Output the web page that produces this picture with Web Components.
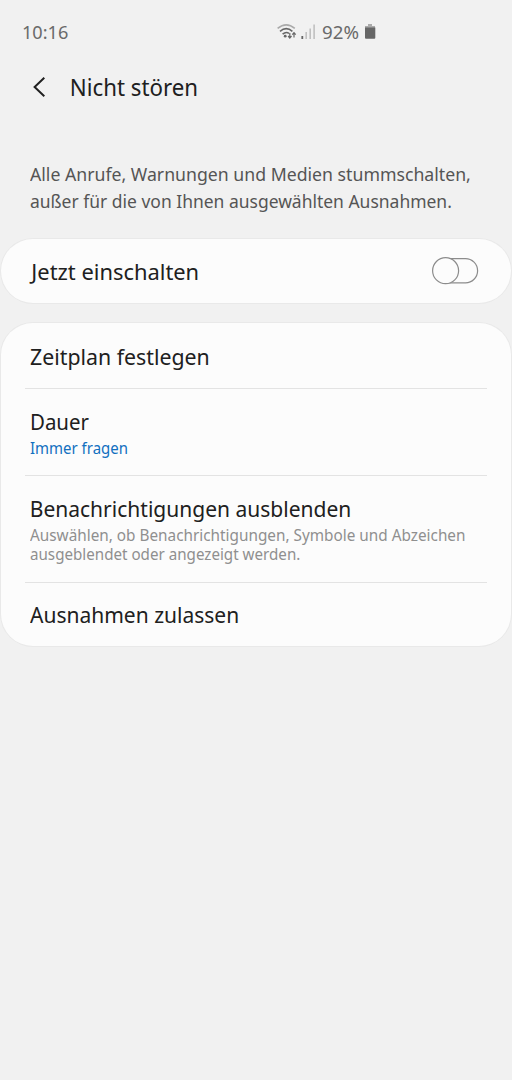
<!DOCTYPE html>
<html lang="de"><head><meta charset="utf-8"><title>Nicht stören</title>
<style>
html,body{margin:0;height:100%;background:#f1f1f1}
body{font-family:"Noto Sans","Open Sans",sans-serif;color:#202020}
</style></head><body>
<dnd-screen></dnd-screen>
<script>
const define=(name,html,init)=>customElements.define(name,class extends HTMLElement{
  constructor(){super();const t=document.createElement('template');t.innerHTML=html;
    this.attachShadow({mode:'open'}).append(t.content.cloneNode(true));}
  connectedCallback(){if(init)init(this);}
});
const ctx=document.createElement('canvas').getContext('2d');

define('status-bar',`<style>
:host{display:flex;height:26px;padding:19px 0 0 23px;font-size:18px;line-height:26px;color:#6a6a6a}
.time{width:254px}.pct{width:42px}svg{display:block;margin-top:4px}
</style>
<fit-line class="time" ink="45">10:16</fit-line>
<svg width="45" height="18" viewBox="277 23 45 18" fill="none" stroke="#666" stroke-width="1.6">
<path d="M277.6 28.4Q286.2 21.2 294.8 28.4" stroke="#aaa"/><path d="M280 31.3Q286.2 26.1 292.4 31.3M282.6 34.2Q286 31.2 289 33.4"/>
<circle cx="285.2" cy="36.2" r="1.4" fill="#666" stroke="none"/>
<path d="M289.8 33v5M288.1 36l1.7 2 1.7-2M294 37.6v-5M292.3 34.6l1.7-2 1.7 2" stroke-width="1.2"/>
<path d="M302.3 36v3" stroke-width="1.8"/><path d="M306.2 32v7M310.2 28.5v10.5M314.1 24.5v14.5" stroke="#bdbdbd" stroke-width="1.5"/></svg>
<fit-line class="pct" ink="37">92%</fit-line>
<svg width="12" height="18" viewBox="364 23 12 18"><path d="M368 24h4v2h3v3h-10v-3h3z" fill="#aaa"/><path d="M365 27.5h10.3v10.2q0 1-1 1h-8.3q-1 0-1-1z" fill="#666"/></svg>`);

define('title-bar',`<style>
:host{display:flex;height:32px;padding:26px 0 0 30px;font-size:23px;line-height:32px}
svg{width:40px;height:32px}
</style><svg viewBox="30 71 40 32" fill="none" stroke="#202020" stroke-width="2"><path d="M44.3 77.7L34.6 87l9.7 9.3"/></svg><slot></slot>`);

define('intro-text',`<style>:host{display:block;padding:58px 30px 24px;font-size:18.2px;line-height:27px;color:#555}</style><slot></slot>`);

define('settings-card',`<style>:host{display:block;box-sizing:border-box;background:#fcfcfc;border-radius:32px;box-shadow:0 0 0 1px #e9e9e9;margin:0 1px 20px}</style><slot></slot>`);

define('setting-row',`<style>
:host{display:flex;align-items:center;margin:0 24px;padding:18px 8px 17px 5px;border-top:1px solid #e3e3e3}
:host([first]){border-top:0;padding-top:19px;padding-bottom:16px}
:host([last]){padding-top:17px;padding-bottom:16px}
:host([tall]){padding-bottom:18px}
:host([single]){border:0;padding-top:18px;padding-bottom:16px}
.copy{flex:1;min-width:0}
.label{font-size:22.3px;line-height:30px}
.sub{font-size:16.2px;line-height:19px;color:#8f8f8f}
:host([accent]) .sub{color:#1270c0}
</style><div class="copy"><div class="label"><slot></slot></div><div class="sub"><slot name="sub"></slot></div></div><slot name="control"></slot>`);

define('toggle-switch',`<style>:host{display:block;width:48px;height:28px;margin-top:-2px}svg{display:block}</style>
<svg width="48" height="28" viewBox="431 257 48 28" fill="#fcfcfc" stroke="#8c8c8c" stroke-width="1.2"><rect x="434" y="258.6" width="43.6" height="24.2" rx="12.1"/><circle cx="445.6" cy="270.7" r="13"/></svg>`);

define('dnd-screen',`<style>
:host{display:block;min-height:100vh;background:#f1f1f1}
.space{padding-top:2px}
</style>
<status-bar></status-bar>
<title-bar><fit-line ink="125" inset="1.8">Nicht stören</fit-line></title-bar>
<intro-text><fit-line ink="440">Alle Anrufe, Warnungen und Medien stummschalten,</fit-line><fit-line ink="421">außer für die von Ihnen ausgewählten Ausnahmen.</fit-line></intro-text>
<settings-card><setting-row single><fit-line ink="168" inset="-.6">Jetzt einschalten</fit-line><toggle-switch slot="control"></toggle-switch></setting-row></settings-card>
<settings-card>
<setting-row first><fit-line ink="178">Zeitplan festlegen</fit-line></setting-row>
<setting-row accent><fit-line ink="57" inset="1.8">Dauer</fit-line><fit-line class="space" slot="sub" ink="97">Immer fragen</fit-line></setting-row>
<setting-row tall><fit-line ink="318" inset="1.6">Benachrichtigungen ausblenden</fit-line><fit-line class="space" slot="sub" ink="434.5">Auswählen, ob Benachrichtigungen, Symbole und Abzeichen</fit-line><fit-line slot="sub" ink="270">ausgeblendet oder angezeigt werden.</fit-line></setting-row>
<setting-row last><fit-line ink="207.5">Ausnahmen zulassen</fit-line></setting-row>
</settings-card>`);

// One line of text, condensed to a given ink width. Defined last so that
// the inherited font size of every host is known when it measures itself.
define('fit-line',`<style>:host{display:block;white-space:nowrap}span{display:inline-block;vertical-align:top;transform-origin:0 0}</style><span><slot></slot></span>`,el=>{
  const cs=getComputedStyle(el);
  ctx.font=`${cs.fontWeight} ${cs.fontSize} ${cs.fontFamily}`;
  const m=ctx.measureText(el.textContent);
  const s=+el.getAttribute('ink')/(m.actualBoundingBoxLeft+m.actualBoundingBoxRight);
  const x=m.actualBoundingBoxLeft*s+Number(el.getAttribute('inset')||0);
  el.shadowRoot.querySelector('span').style.transform=`translateX(${x}px) scaleX(${s})`;
});
</script></body></html>
